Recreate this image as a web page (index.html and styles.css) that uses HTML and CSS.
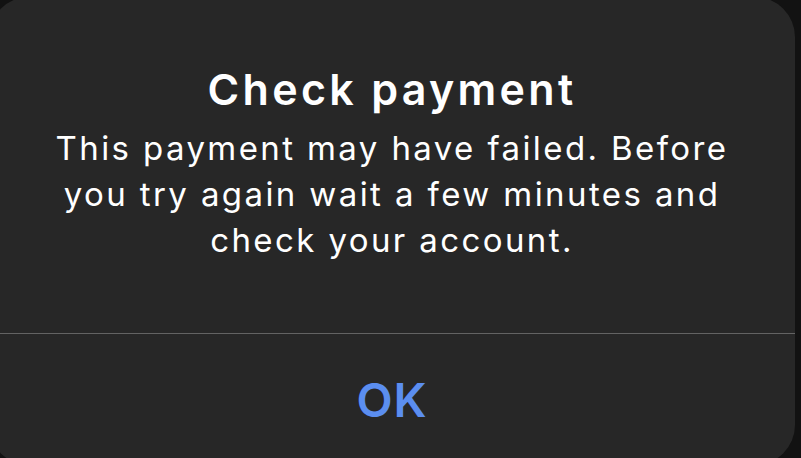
FILE: index.html
```html
<!DOCTYPE html>
<html lang="en">
<head>
  <meta charset="UTF-8" />
  <meta name="viewport" content="width=device-width, initial-scale=1.0" />
  <title>Check payment</title>
  <link rel="stylesheet" href="styles.css">
</head>
<body>
  <div class="alert">
    <div class="alert-content">
      <h1 class="alert-title">Check payment</h1>
      <p class="alert-message">This payment may have failed. Before you try again wait a few minutes and check your account.</p>
    </div>
    <button class="alert-button" type="button">OK</button>
  </div>
</body>
</html>
```

FILE: styles.css
```css
html, body {
  margin: 0;
  height: 100%;
  overflow: hidden;
  background: #121212;
}
body {
  font-family: Inter, "Noto Sans", sans-serif;
  color: #fff;
}
.alert {
  width: 806px;
  height: 468px;
  margin: -3px 0 0 -11px;
  background: #272727;
  border-radius: 40px;
  display: flex;
  flex-direction: column;
}
.alert-content {
  height: 337px;
  box-sizing: border-box;
  padding: 68px 50px 0;
  text-align: center;
  border-bottom: 1px solid #636363;
}
.alert-title {
  margin: 0;
  font-size: 43px;
  line-height: 48px;
  font-weight: 600;
  letter-spacing: 3.3px;
}
.alert-message {
  margin: 12px 0 0;
  font-size: 33px;
  line-height: 46px;
  font-weight: 400;
  letter-spacing: 2.4px;
}
.alert-button {
  flex: 1;
  border: none;
  background: none;
  padding: 0;
  font-family: inherit;
  font-size: 47px;
  font-weight: 600;
  letter-spacing: 1px;
  color: #5b8ef0;
  cursor: pointer;
}
```
